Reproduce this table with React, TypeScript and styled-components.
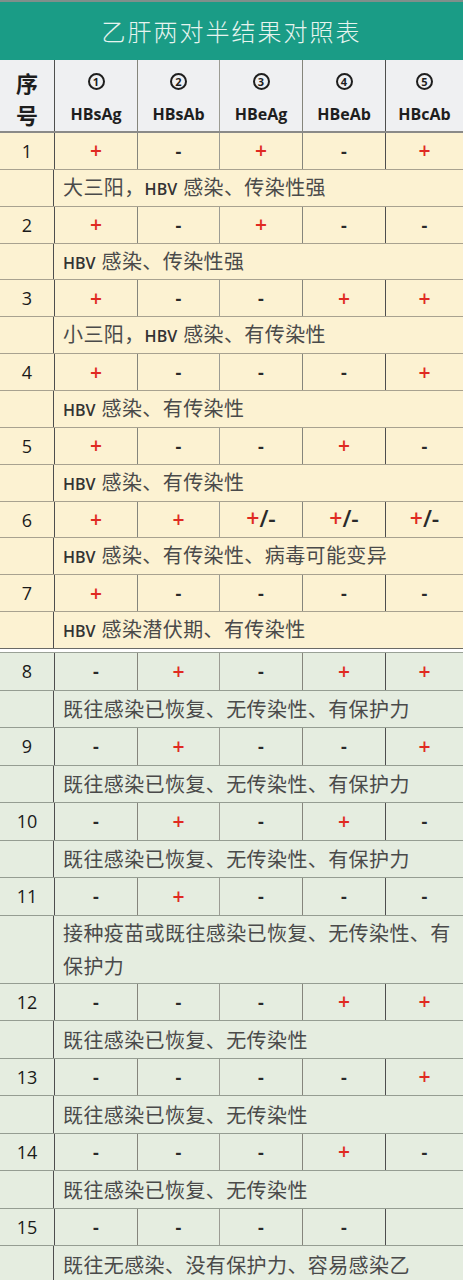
import React from 'react';
import styled, { createGlobalStyle } from 'styled-components';

const GlobalStyle = createGlobalStyle`
  html, body { margin: 0; padding: 0; background: #ffffff; }
  body { width: 463px; font-family: "Open Sans", "Noto Sans CJK SC", sans-serif; }
  * { box-sizing: border-box; }
`;

const COLS = '54px 83px 82px 83px 83px 1fr';
const LINES = ['#4e4e4e', '#85857c', '#9c9c94', '#85857c', '#4e4e4e'];

type Tone = 'yellow' | 'green';
const BG: Record<Tone, string> = { yellow: '#fcf2d2', green: '#e5ede0' };
const HLINE: Record<Tone, string> = { yellow: '#a8a290', green: '#959d92' };

const Page = styled.div`
  width: 463px;
  display: flex;
  flex-direction: column;
`;

const Title = styled.div`
  height: 60px;
  border-top: 2px solid #7f8f8b;
  background: #1a9c86;
  color: #e6f4ef;
  font-family: "Noto Sans CJK SC", sans-serif;
  font-size: 24px;
  font-weight: 300;
  letter-spacing: 2px;
  display: flex;
  align-items: center;
  justify-content: center;
  padding-bottom: 2px;
`;

const HeaderRow = styled.div`
  display: grid;
  grid-template-columns: ${COLS};
  height: 73px;
  background: #eff0f2;
  border-bottom: 2px solid #8a8a88;
`;

const HeadCell = styled.div<{ $line?: string }>`
  display: flex;
  flex-direction: column;
  align-items: center;
  justify-content: center;
  gap: 4px;
  padding-top: 4px;
  border-left: ${p => (p.$line ? `1px solid ${p.$line}` : 'none')};
  color: #1e1e1e;
`;

const HeadHan = styled.span`
  font-family: "Noto Sans CJK SC", sans-serif;
  font-weight: 700;
  font-size: 22px;
  line-height: 28px;
`;

const CircleSlot = styled.span`
  height: 28px;
  display: flex;
  align-items: center;
  justify-content: center;
`;

const Circled = styled.span`
  width: 17px;
  height: 17px;
  border: 2px solid #1e1e1e;
  border-radius: 50%;
  display: inline-flex;
  align-items: center;
  justify-content: center;
  font-family: "Open Sans", sans-serif;
  font-weight: 700;
  font-size: 11px;
  line-height: 1;
  color: #1e1e1e;
`;

const Marker = styled.span`
  font-family: "Open Sans", sans-serif;
  font-weight: 700;
  font-size: 16px;
  line-height: 28px;
`;

const Group = styled.div<{ $tone: Tone }>`
  display: flex;
  flex-direction: column;
  background: ${p => BG[p.$tone]};
  border-top: ${p => (p.$tone === 'green' ? '1px solid #9aa197' : 'none')};
  margin-top: ${p => (p.$tone === 'green' ? '3px' : '0')};
`;

const Row = styled.div<{ $tone: Tone; $h: number }>`
  display: grid;
  grid-template-columns: ${COLS};
  height: ${p => p.$h}px;
  border-bottom: 1px solid ${p => HLINE[p.$tone]};
  &:last-child { border-bottom-color: #6a6a66; }
`;

const Cell = styled.div<{ $line?: string }>`
  display: flex;
  align-items: center;
  justify-content: center;
  border-left: ${p => (p.$line ? `1px solid ${p.$line}` : 'none')};
`;

const Num = styled.span`
  font-family: "Open Sans", sans-serif;
  font-size: 18px;
  font-weight: 400;
  color: #1a1a1a;
`;

const Plus = styled.span<{ $big?: boolean }>`
  font-family: "Open Sans", sans-serif;
  font-size: ${p => (p.$big ? 23 : 21)}px;
  font-weight: 600;
  color: #e02a22;
  line-height: 1;
`;

const Minus = styled.span<{ $big?: boolean }>`
  font-family: "Open Sans", sans-serif;
  font-size: ${p => (p.$big ? 23 : 18)}px;
  font-weight: ${p => (p.$big ? 600 : 700)};
  color: #2a2a2a;
  line-height: 1;
`;

const DescRow = styled.div<{ $tone: Tone; $h: number }>`
  display: grid;
  grid-template-columns: 54px 1fr;
  height: ${p => p.$h}px;
  border-bottom: 1px solid ${p => HLINE[p.$tone]};
  &:last-child { border-bottom-color: #6a6a66; }
`;

const Spacer = styled.div`
  border-right: 1px solid #4e4e4e;
`;

const DescText = styled.div`
  display: flex;
  align-items: center;
  padding: 0 6px 0 9px;
  font-family: "Noto Sans CJK SC", sans-serif;
  font-size: 20px;
  letter-spacing: 0.4px;
  line-height: 33px;
  color: #4a4a4a;
  overflow: hidden;
  white-space: normal;
`;

const Latin = styled.span`
  font-family: "Open Sans", sans-serif;
  font-size: 16px;
  font-weight: 600;
  letter-spacing: 0;
  color: #333;
  margin-right: 6px;
`;

type Sign = '+' | '-' | '+/-' | '';

interface Entry {
  n: number;
  signs: Sign[];
  desc: string;
  descH?: number;
}

const yellow: Entry[] = [
  { n: 1, signs: ['+', '-', '+', '-', '+'], desc: '大三阳，HBV 感染、传染性强' },
  { n: 2, signs: ['+', '-', '+', '-', '-'], desc: 'HBV 感染、传染性强' },
  { n: 3, signs: ['+', '-', '-', '+', '+'], desc: '小三阳，HBV 感染、有传染性' },
  { n: 4, signs: ['+', '-', '-', '-', '+'], desc: 'HBV 感染、有传染性' },
  { n: 5, signs: ['+', '-', '-', '+', '-'], desc: 'HBV 感染、有传染性' },
  { n: 6, signs: ['+', '+', '+/-', '+/-', '+/-'], desc: 'HBV 感染、有传染性、病毒可能变异' },
  { n: 7, signs: ['+', '-', '-', '-', '-'], desc: 'HBV 感染潜伏期、有传染性' },
];

const green: Entry[] = [
  { n: 8, signs: ['-', '+', '-', '+', '+'], desc: '既往感染已恢复、无传染性、有保护力' },
  { n: 9, signs: ['-', '+', '-', '-', '+'], desc: '既往感染已恢复、无传染性、有保护力' },
  { n: 10, signs: ['-', '+', '-', '+', '-'], desc: '既往感染已恢复、无传染性、有保护力' },
  { n: 11, signs: ['-', '+', '-', '-', '-'], desc: '接种疫苗或既往感染已恢复、无传染性、有保护力', descH: 68 },
  { n: 12, signs: ['-', '-', '-', '+', '+'], desc: '既往感染已恢复、无传染性' },
  { n: 13, signs: ['-', '-', '-', '-', '+'], desc: '既往感染已恢复、无传染性' },
  { n: 14, signs: ['-', '-', '-', '+', '-'], desc: '既往感染已恢复、无传染性' },
  { n: 15, signs: ['-', '-', '-', '-', ''], desc: '既往无感染、没有保护力、容易感染乙' },
];

const SignView: React.FC<{ s: Sign }> = ({ s }) => {
  if (s === '+') return <Plus>+</Plus>;
  if (s === '-') return <Minus>-</Minus>;
  if (s === '+/-')
    return (
      <span>
        <Plus $big>+</Plus>
        <Minus $big>/-</Minus>
      </span>
    );
  return null;
};

const Desc: React.FC<{ text: string }> = ({ text }) => {
  const parts = text.split('HBV ');
  return (
    <DescText>
      <span>
        {parts.map((p, i) => (
          <React.Fragment key={i}>
            {i > 0 && <Latin>HBV</Latin>}
            {p}
          </React.Fragment>
        ))}
      </span>
    </DescText>
  );
};

const Block: React.FC<{ tone: Tone; entries: Entry[]; h: number }> = ({ tone, entries, h }) => (
  <Group $tone={tone}>
    {entries.map(e => (
      <React.Fragment key={e.n}>
        <Row $tone={tone} $h={h}>
          <Cell>
            <Num>{e.n}</Num>
          </Cell>
          {e.signs.map((s, i) => (
            <Cell key={i} $line={LINES[i]}>
              <SignView s={s} />
            </Cell>
          ))}
        </Row>
        <DescRow $tone={tone} $h={e.descH ?? h}>
          <Spacer />
          <Desc text={e.desc} />
        </DescRow>
      </React.Fragment>
    ))}
  </Group>
);

const heads = [
  { c: '1', m: 'HBsAg' },
  { c: '2', m: 'HBsAb' },
  { c: '3', m: 'HBeAg' },
  { c: '4', m: 'HBeAb' },
  { c: '5', m: 'HBcAb' },
];

export default function App() {
  return (
    <Page>
      <GlobalStyle />
      <Title>乙肝两对半结果对照表</Title>
      <HeaderRow>
        <HeadCell>
          <HeadHan>序</HeadHan>
          <HeadHan>号</HeadHan>
        </HeadCell>
        {heads.map((h, i) => (
          <HeadCell key={h.m} $line={LINES[i]}>
            <CircleSlot>
              <Circled>{h.c}</Circled>
            </CircleSlot>
            <Marker>{h.m}</Marker>
          </HeadCell>
        ))}
      </HeaderRow>
      <Block tone="yellow" entries={yellow} h={36.86} />
      <Block tone="green" entries={green} h={37.5} />
    </Page>
  );
}
